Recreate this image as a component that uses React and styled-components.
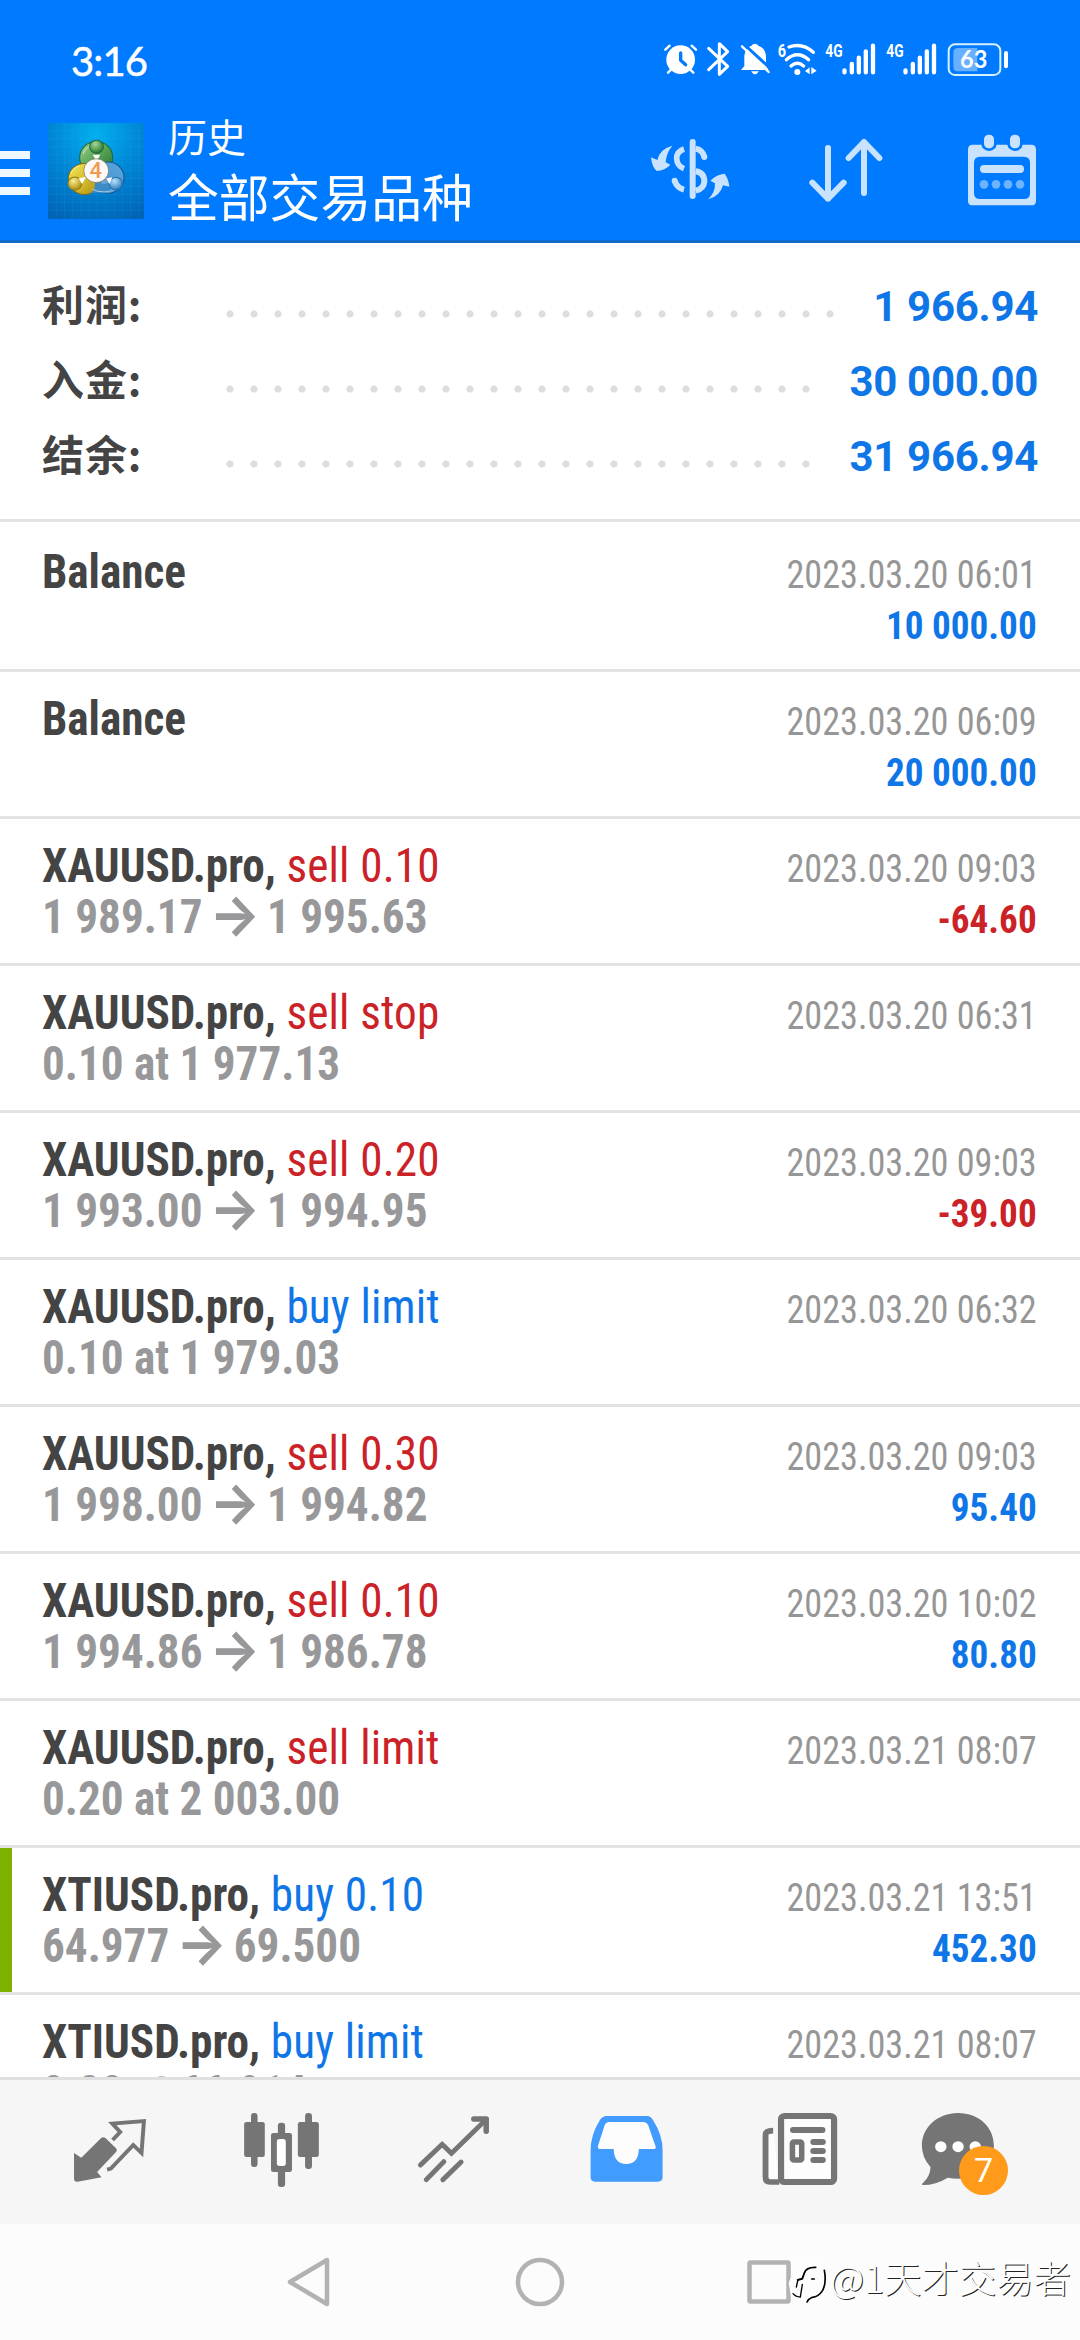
import React from "react";
import styled, { createGlobalStyle, css } from "styled-components";

const Global = createGlobalStyle`
  *, *::before, *::after { box-sizing: border-box; }
  html, body { margin: 0; padding: 0; background: #fff; }
  body { font-family: Roboto, "Noto Sans CJK SC", sans-serif; }
`;

const BLUE = "#007aff";
const TONES = { buy: "#0f76e8", sell: "#cb2228" };

const Screen = styled.div`
  width: 1080px;
  height: 2340px;
  display: flex;
  flex-direction: column;
  overflow: hidden;
  background: #fff;
`;

/* ---------- header ---------- */
const Header = styled.header`
  flex: none;
  height: 243px;
  background: ${BLUE};
  border-bottom: 3px solid #116bcd;
  color: #fff;
`;

const StatusBar = styled.div`
  height: 118px;
  padding: 0 72px 0 70px;
  display: flex;
  align-items: center;
  justify-content: space-between;
`;

const Clock = styled.span`
  font-family: Lato, Roboto, sans-serif;
  font-size: 40px;
  line-height: 48px;
  letter-spacing: -0.9px;
  -webkit-text-stroke: 0.5px #fff;
  padding: 4px 0 0 1px;
`;

const StatusIcons = styled.div`
  display: flex;
  align-items: center;
`;

const Toolbar = styled.div`
  height: 122px;
  display: flex;
  align-items: flex-start;
`;

const MenuButton = styled.div`
  width: 30px;
  padding-top: 33px;
  display: flex;
  flex-direction: column;
  gap: 10px;
`;

const MenuLine = styled.i`
  height: 8px;
  background: #eef8ff;
`;

const AppLogo = styled.svg`
  margin: 5px 24px 0 18px;
  width: 96px;
  height: 96px;
`;

const Titles = styled.div`
  flex: 1;
  font-family: "Noto Sans CJK SC", sans-serif;
  font-weight: 400;
`;

const Overline = styled.div`
  font-size: 39px;
  line-height: 44px;
  margin-top: -5px;
`;

const Title = styled.div`
  font-size: 50.8px;
  line-height: 60px;
  margin-top: 8px;
`;

const ToolButton = styled.div`
  width: 156px;
  height: 104px;
  display: flex;
  justify-content: center;
`;

/* ---------- summary ---------- */
const Summary = styled.section`
  flex: none;
  height: 279px;
  padding: 25px 42px 0;
  border-bottom: 3px solid #e3e3e3;
`;

const SummaryRow = styled.div`
  height: 75px;
  display: flex;
  align-items: center;
`;

const SummaryLabel = styled.span`
  width: 176px;
  margin-top: -5px;
  font-family: "Noto Sans CJK SC", sans-serif;
  font-size: 42px;
  line-height: 60px;
  letter-spacing: 0.9px;
  font-weight: 700;
  color: #444;
`;

const Leader = styled.span`
  width: ${(p) => p.$dots * 24}px;
  height: 8px;
  margin-top: 17px;
  background: radial-gradient(circle at 12px 4px, #dedede 3.2px, transparent 4px) 0 0 / 24px 8px repeat-x;
`;

const SummaryValue = styled.span`
  flex: 1;
  margin-top: 2px;
  text-align: right;
  font-size: 42px;
  line-height: 50px;
  letter-spacing: -0.3px;
  font-weight: 700;
  color: ${TONES.buy};
`;

/* ---------- history ---------- */
const History = styled.main`
  flex: none;
  height: 1555px;
  overflow: hidden;
`;

const condensed = css`
  font-family: "Roboto Condensed", Roboto, sans-serif;
  font-stretch: 75%;
  white-space: pre;
`;

const Deal = styled.article`
  height: 147px;
  padding-right: 43px;
  border-top: 3px solid ${(p) => (p.$first ? "transparent" : "#e3e3e3")};
  display: flex;
`;

const Marker = styled.i`
  width: 12px;
  background: ${(p) => (p.$on ? "#7fb200" : "transparent")};
`;

const DealBody = styled.div`
  flex: 1;
  padding: 21px 0 0 30px;
  ${condensed}
  font-size: 48px;
  line-height: 51px;
  color: #444;
  font-weight: 700;
`;

const Heading = styled.div`
  transform: scaleX(0.941);
  transform-origin: left;
`;

const Kind = styled.span`
  font-weight: 400;
  letter-spacing: 0.2px;
  color: ${(p) => TONES[p.$tone]};
`;

const Prices = styled(Heading)`
  color: #98989a;
`;

const Arrow = styled.span`
  font-family: Inter, sans-serif;
  font-size: 57px;
  line-height: 30px;
  font-weight: 700;
  letter-spacing: -4px;
  margin-left: -4px;
  vertical-align: -2px;
`;

const DealMeta = styled.div`
  ${condensed}
  font-size: 39px;
  line-height: 51px;
  padding-top: 25px;
  text-align: right;
  color: #969696;
`;

const Time = styled.div`
  transform: scaleX(0.928);
  transform-origin: right;
`;

const Amount = styled.div`
  transform: scaleX(0.952);
  transform-origin: right;
  font-weight: 700;
  color: ${(p) => TONES[p.$tone]};
`;

/* ---------- bottom ---------- */
const Tabs = styled.nav`
  flex: none;
  height: 147px;
  padding-left: 22px;
  display: flex;
  border-top: 3px solid #e0e0e0;
  background: #f6f6f6;
`;

const Tab = styled.div`
  position: relative;
  width: 173px;
  height: 144px;
`;

const Badge = styled.span`
  position: absolute;
  left: 72px;
  top: 66px;
  width: 49px;
  height: 49px;
  border-radius: 50%;
  background: #ff9a1a;
  color: #fff;
  font-size: 34px;
  line-height: 49px;
  text-align: center;
`;

const SystemNav = styled.footer`
  position: relative;
  flex: none;
  height: 116px;
  display: flex;
  justify-content: center;
  background: #fcfcfc;
`;

const NavButton = styled.div`
  width: 230px;
  height: 116px;
  display: flex;
  align-items: center;
  justify-content: center;
`;

const Watermark = styled.div`
  position: absolute;
  right: 9px;
  top: 26px;
  display: flex;
  align-items: center;
  gap: 2px;
  font-family: "Noto Sans CJK SC", sans-serif;
  font-size: 37.4px;
  line-height: 50px;
  font-weight: 300;
  color: #fff;
  text-shadow: 1px 1px 0 #222;
`;

const WatermarkMark = styled.svg`
  width: 40px;
  height: 46px;
  margin-top: 8px;
`;

/* ---------- status glyphs ---------- */
function Glyph({ x, w, children }) {
  return (
    <svg width={w / 3} height={40} viewBox={`${x} 57 ${w} 120`} fill="none" stroke="#fff" strokeLinecap="round" strokeLinejoin="round">
      {children}
    </svg>
  );
}

function Signal() {
  return (
    <Glyph x={541} w={183}>
      <text x="554" y="112" fontFamily="Roboto" fontWeight="700" fontSize="56" textLength="52" lengthAdjust="spacingAndGlyphs" fill="#fff" stroke="none">4G</text>
      <path d="M611.500 151V157M633.500 132V157M654.500 113V157M675.500 94V157M697 77V157" strokeWidth="13" />
    </Glyph>
  );
}

function StatusGlyphs() {
  return (
    <StatusIcons>
      <Glyph x={70} w={116}>
        <circle cx="120" cy="119" r="43" fill="#fff" stroke="none" />
        <path d="M74 89L87 77M153 77L166 89M82 158L92 148M158 158L148 148" strokeWidth="7" />
        <path d="M120 99V121L135 134" stroke={BLUE} strokeWidth="10" />
      </Glyph>
      <Glyph x={186} w={99}>
        <path d="M206 85L263 139L238 163V71L263 95L206 149" strokeWidth="9" />
      </Glyph>
      <Glyph x={285} w={117}>
        <path d="M303 150L313 138V112C313 92 324 80 335 77C338 69 351 69 355 77C368 81 378 92 378 112V138L386 150Z" fill="#fff" stroke="none" />
        <path d="M333 154Q345 172 357 154Z" fill="#fff" stroke="none" />
        <path d="M311 72L396 150" stroke={BLUE} strokeWidth="9" />
        <path d="M306 79L386 156" strokeWidth="7" />
      </Glyph>
      <Glyph x={402} w={139}>
        <text x="413" y="111" fontFamily="Roboto" fontWeight="700" fontSize="56" textLength="25" lengthAdjust="spacingAndGlyphs" fill="#fff" stroke="none">6</text>
        <circle cx="472" cy="156" r="9" fill="#fff" stroke="none" />
        <path d="M453 138Q472 121 491 138M439 119Q472 89 506 119M447 81Q487 67 520 97" strokeWidth="10" />
        <path d="M509 142V163L495 153ZM514 141V163L530 152Z" fill="#fff" stroke="none" />
      </Glyph>
      <Signal />
      <Signal />
      <Glyph x={907} w={196}>
        <path d="M952 84H1010V154H952Q938 154 938 140V98Q938 84 952 84Z" fill="#66b0ff" stroke="none" />
        <rect x="924" y="73" width="155" height="92" rx="19" strokeWidth="6" stroke="#d8f0ff" />
        <path d="M1096 99V139" strokeWidth="12" />
        <text x="958" y="144" fontFamily="Lato" fontWeight="700" fontSize="72" textLength="82" lengthAdjust="spacingAndGlyphs" fill="#fff" stroke="none">63</text>
      </Glyph>
    </StatusIcons>
  );
}

function LogoArt() {
  return (
    <AppLogo viewBox="139 368 279 290" preserveAspectRatio="none">
      <defs>
        <radialGradient id="lg" cx=".5" cy=".12" r=".95">
          <stop offset="0" stopColor="#00b0ee" />
          <stop offset=".45" stopColor="#0089d8" />
          <stop offset="1" stopColor="#0064b6" />
        </radialGradient>
        <linearGradient id="gr" x1="0" y1="0" x2="1" y2="1"><stop offset="0" stopColor="#9fcf90" /><stop offset=".5" stopColor="#58a455" /><stop offset="1" stopColor="#256f30" /></linearGradient>
        <linearGradient id="ye" x1="0" y1="0" x2="1" y2="1"><stop offset="0" stopColor="#f3e85a" /><stop offset=".5" stopColor="#d8bf2c" /><stop offset="1" stopColor="#a98a12" /></linearGradient>
        <linearGradient id="bl" x1="1" y1="0" x2="0" y2="1"><stop offset="0" stopColor="#5ba6dc" /><stop offset=".5" stopColor="#4d9ad4" /><stop offset="1" stopColor="#a9d4f0" /></linearGradient>
        <radialGradient id="gb" cx=".4" cy=".3" r=".7"><stop offset="0" stopColor="#a5d698" /><stop offset="1" stopColor="#277a30" /></radialGradient>
        <radialGradient id="yb" cx=".4" cy=".3" r=".7"><stop offset="0" stopColor="#fbf08c" /><stop offset="1" stopColor="#ab8a12" /></radialGradient>
        <radialGradient id="bb" cx=".4" cy=".3" r=".7"><stop offset="0" stopColor="#b8e0fa" /><stop offset="1" stopColor="#2f7fc2" /></radialGradient>
      </defs>
      <rect x="139" y="368" width="279" height="290" fill="url(#lg)" />
      <path d="M163 368V658M187 368V658M211 368V658M235 368V658M259 368V658M283 368V658M307 368V658M331 368V658M355 368V658M379 368V658M403 368V658M139 392H418M139 416H418M139 440H418M139 464H418M139 488H418M139 512H418M139 536H418M139 560H418M139 584H418M139 608H418M139 632H418" stroke="#48b9f0" strokeOpacity=".18" strokeWidth="2" />
      <g strokeWidth="3">
        <circle cx="279" cy="472" r="48" fill="url(#gr)" stroke="#1e6a3c" />
        <circle cx="313" cy="533" r="47" fill="url(#bl)" stroke="#15568f" />
        <circle cx="245" cy="537" r="47" fill="url(#ye)" stroke="#7d6d18" />
        <path d="M262 581Q280 566 274 540Q300 560 325 545Q330 570 305 580Q280 576 262 581Z" fill="#3c8ac6" stroke="none" />
        <path d="M241 462Q248 440 268 436M205 520Q214 500 232 497M268 568Q290 580 315 574" fill="none" stroke="#fff" strokeOpacity=".5" />
        <circle cx="280" cy="440" r="20" fill="url(#gb)" stroke="#1e6a3c" />
        <circle cx="217" cy="551" r="20" fill="url(#yb)" stroke="#8e7a18" />
        <circle cx="336" cy="551" r="19" fill="url(#bb)" stroke="#2270ad" />
      </g>
      <path d="M269 464H291L280 484ZM228 536L238 552L250 530ZM326 532L318 552L308 536Z" fill="#fff" />
      <circle cx="279" cy="512" r="36" fill="#fdf9f6" stroke="#6f6a5c" strokeWidth="2" />
      <text x="278" y="534" textAnchor="middle" fontFamily="Roboto" fontWeight="500" fontSize="64" fill="#f39a4c">4</text>
    </AppLogo>
  );
}

const ICE = "#c9e3ff";

function HeaderTools() {
  return (
    <>
      <ToolButton>
        <svg width="80" height="104" viewBox="30 294 240 312" fill="none" stroke={ICE} strokeLinecap="round">
          <path d="M158 366V528" strokeWidth="18" />
          <path d="M132 387Q109 395 110 416Q111 438 132 446" strokeWidth="17" strokeLinecap="butt" />
          <path d="M167 386Q188 390 193 411M167 454Q193 458 193 485Q191 506 167 512M104 483Q112 504 132 509" strokeWidth="18" strokeLinecap="butt" />
          <circle cx="193" cy="411" r="9" fill={ICE} stroke="none" />
          <circle cx="104" cy="482" r="9" fill={ICE} stroke="none" />
          <path d="M97 377Q59 387 52 420L33 412Q36 441 50 453Q75 452 91 434L77 427Q79 399 97 377ZM204 538Q226 518 225 490L211 482Q230 463 254 461Q266 478 268 500L249 496Q240 530 204 538Z" fill={ICE} stroke="none" />
        </svg>
      </ToolButton>
      <ToolButton>
        <svg width="80" height="104" viewBox="498 294 240 312" fill="none" stroke={ICE} strokeWidth="18" strokeLinecap="round" strokeLinejoin="round">
          <path d="M564 384V536M517 488L564 536L611 488M672 519V366M626 414L672 366L718 414" />
        </svg>
      </ToolButton>
      <ToolButton>
        <svg width="80" height="104" viewBox="966 294 240 312">
          <path fillRule="evenodd" fill={ICE} d="M998 374H1174Q1188 374 1188 388V542Q1188 556 1174 556H998Q984 556 984 542V388Q984 374 998 374ZM1020 410Q1002 410 1002 428V519Q1002 537 1020 537H1152Q1170 537 1170 519V428Q1170 410 1152 410Z" />
          <g fill={ICE} stroke={BLUE} strokeWidth="8">
            <rect x="1028" y="340" width="38" height="49" rx="18" />
            <rect x="1106" y="340" width="38" height="49" rx="18" />
          </g>
          <rect x="1020" y="435" width="132" height="24" rx="12" fill={ICE} />
          <g fill="#6db3ff">
            <circle cx="1032" cy="493" r="13" /><circle cx="1068" cy="493" r="13" /><circle cx="1104" cy="493" r="13" /><circle cx="1140" cy="493" r="13" />
          </g>
        </svg>
      </ToolButton>
    </>
  );
}

/* ---------- tab icons ---------- */
const GREY = "#757575";

function TabIcon({ x, children }) {
  return (
    <svg width="173" height="144" viewBox={`${x} 30 502.400 432`} preserveAspectRatio="none" fill="none">
      {children}
    </svg>
  );
}

function TabBar() {
  return (
    <Tabs>
      <Tab>
        <TabIcon x={63.9}>
          <path d="M215 249L236 263L293 205Q300 199 307 205L337 235Q342 241 337 246L282 306L295 322L225 335Q215 336 215 326Z" fill={GREY} />
          <path d="M327 210L349 186L326 161L418 153L411 249L387 225L322 296L311 299" stroke={GREY} strokeWidth="11.500" />
        </TabIcon>
      </Tab>
      <Tab>
        <TabIcon x={566.3}>
          <g fill={GREY}>
            <rect x="709" y="156" width="60" height="105" rx="7" /><rect x="729" y="129" width="19" height="162" rx="9" />
            <rect x="865" y="156" width="61" height="105" rx="7" /><rect x="886" y="129" width="20" height="168" rx="9" />
            <rect x="787" y="189" width="61" height="117" rx="7" /><rect x="807" y="158" width="21" height="193" rx="9" />
          </g>
          <rect x="804" y="207" width="26" height="81" rx="8" fill="#fff" />
        </TabIcon>
      </Tab>
      <Tab>
        <TabIcon x={1068.7}>
          <g stroke={GREY} strokeWidth="14.500" strokeLinecap="round">
            <path d="M1221 285L1284 223L1311 250L1412 148M1238 329L1289 275M1286 329L1339 276" />
            <path d="M1376 147H1412V184" strokeWidth="16" strokeLinejoin="round" />
          </g>
        </TabIcon>
      </Tab>
      <Tab>
        <TabIcon x={2.9}>
          <path d="M193 138H312Q322 139 328 150Q356 195 356 240V322Q356 335 342 335H160Q147 335 147 322V240Q147 195 174 150Q181 139 193 138Z" fill="#429cff" />
          <path d="M202 156H301Q311 157 314 165L336 230Q337 237 330 237H287Q286 282 250 282Q215 282 214 237H172Q167 236 168 229L188 165Q192 156 202 156Z" fill="#fdfdfd" />
        </TabIcon>
      </Tab>
      <Tab>
        <TabIcon x={505.3}>
          <path d="M677 182Q655 182 655 195V322Q655 336 668 336H695" fill="#fdfdfd" stroke={GREY} strokeWidth="17" />
          <rect x="700" y="138" width="154" height="198" rx="10" fill="#fdfdfd" stroke={GREY} strokeWidth="18" />
          <path d="M735 180H820M794 216H821M794 243H821M794 270H821" stroke={GREY} strokeWidth="18" strokeLinecap="round" />
          <rect x="733" y="216" width="27" height="54" rx="4" stroke={GREY} strokeWidth="16" />
        </TabIcon>
      </Tab>
      <Tab>
        <TabIcon x={1007.7}>
          <path d="M1214 129C1275 129 1318 172 1318 227S1275 326 1214 326Q1198 326 1184 323Q1150 345 1112 345Q1106 343 1113 338Q1134 318 1134 291Q1109 262 1109 227C1109 172 1155 129 1214 129Z" fill={GREY} />
          <g fill="#fff"><circle cx="1164" cy="230" r="16.500" /><circle cx="1214" cy="230" r="16.500" /><circle cx="1264" cy="230" r="16.500" /></g>
        </TabIcon>
        <Badge>7</Badge>
      </Tab>
    </Tabs>
  );
}

function NavigationBar() {
  const line = { fill: "none", stroke: "#b2b2b2", strokeWidth: 4.5, strokeLinejoin: "round" };
  return (
    <SystemNav>
      <NavButton>
        <svg width="50" height="50" viewBox="0 0 50 50"><path {...line} d="M42 3V47L5 25Z" /></svg>
      </NavButton>
      <NavButton>
        <svg width="50" height="50" viewBox="0 0 50 50"><circle {...line} cx="25" cy="25" r="22" /></svg>
      </NavButton>
      <NavButton>
        <svg width="50" height="50" viewBox="0 0 50 50"><rect {...line} x="4.500" y="5.500" width="39" height="39" rx="1" /></svg>
      </NavButton>
      <Watermark>
        <WatermarkMark viewBox="15 55 120 138" fill="none" stroke="#000" strokeLinecap="round">
          <path d="M28 57H112L130 88L131 130L118 158L72 190L40 175L24 170L17 130L30 96Z" fill="#fdfdfd" stroke="none" />
          <path d="M98 83Q70 82 64 100L58 117L44 121" strokeWidth="5.500" />
          <path d="M44 124L40 142M58 134L52 172Q38 172 30 162" strokeWidth="4" />
          <path d="M86 118H94" strokeWidth="5" />
          <path d="M124 92Q131 128 119 152Q106 172 88 173Q76 178 72 187" strokeWidth="5" />
        </WatermarkMark>
        <span>@1天才交易者</span>
      </Watermark>
    </SystemNav>
  );
}

/* ---------- data ---------- */
const summary = [
  { label: "利润:", value: "1 966.94", dots: 26 },
  { label: "入金:", value: "30 000.00", dots: 25 },
  { label: "结余:", value: "31 966.94", dots: 25 },
];

const deals = [
  { name: "Balance", time: "2023.03.20 06:01", amount: "10 000.00", tone: "buy" },
  { name: "Balance", time: "2023.03.20 06:09", amount: "20 000.00", tone: "buy" },
  { name: "XAUUSD.pro,", kind: "sell 0.10", side: "sell", from: "1 989.17", to: "1 995.63", time: "2023.03.20 09:03", amount: "-64.60", tone: "sell" },
  { name: "XAUUSD.pro,", kind: "sell stop", side: "sell", note: "0.10 at 1 977.13", time: "2023.03.20 06:31" },
  { name: "XAUUSD.pro,", kind: "sell 0.20", side: "sell", from: "1 993.00", to: "1 994.95", time: "2023.03.20 09:03", amount: "-39.00", tone: "sell" },
  { name: "XAUUSD.pro,", kind: "buy limit", side: "buy", note: "0.10 at 1 979.03", time: "2023.03.20 06:32" },
  { name: "XAUUSD.pro,", kind: "sell 0.30", side: "sell", from: "1 998.00", to: "1 994.82", time: "2023.03.20 09:03", amount: "95.40", tone: "buy" },
  { name: "XAUUSD.pro,", kind: "sell 0.10", side: "sell", from: "1 994.86", to: "1 986.78", time: "2023.03.20 10:02", amount: "80.80", tone: "buy" },
  { name: "XAUUSD.pro,", kind: "sell limit", side: "sell", note: "0.20 at 2 003.00", time: "2023.03.21 08:07" },
  { name: "XTIUSD.pro,", kind: "buy 0.10", side: "buy", from: "64.977", to: "69.500", time: "2023.03.21 13:51", amount: "452.30", tone: "buy", marked: true },
  { name: "XTIUSD.pro,", kind: "buy limit", side: "buy", note: "0.20 at 66.914", time: "2023.03.21 08:07" },
];

function DealRow({ deal, first }) {
  return (
    <Deal $first={first}>
      <Marker $on={deal.marked} />
      <DealBody>
        <Heading>
          {deal.name}
          {deal.kind && <Kind $tone={deal.side}> {deal.kind}</Kind>}
        </Heading>
        {deal.from && (
          <Prices>
            {deal.from} <Arrow>→</Arrow> {deal.to}
          </Prices>
        )}
        {deal.note && <Prices>{deal.note}</Prices>}
      </DealBody>
      <DealMeta>
        <Time>{deal.time}</Time>
        {deal.amount && <Amount $tone={deal.tone}>{deal.amount}</Amount>}
      </DealMeta>
    </Deal>
  );
}

export default function App() {
  return (
    <Screen>
      <Global />
      <Header>
        <StatusBar>
          <Clock>3:16</Clock>
          <StatusGlyphs />
        </StatusBar>
        <Toolbar>
          <MenuButton><MenuLine /><MenuLine /><MenuLine /></MenuButton>
          <LogoArt />
          <Titles>
            <Overline>历史</Overline>
            <Title>全部交易品种</Title>
          </Titles>
          <HeaderTools />
        </Toolbar>
      </Header>
      <Summary>
        {summary.map((s) => (
          <SummaryRow key={s.label}>
            <SummaryLabel>{s.label}</SummaryLabel>
            <Leader $dots={s.dots} />
            <SummaryValue>{s.value}</SummaryValue>
          </SummaryRow>
        ))}
      </Summary>
      <History>
        {deals.map((d, i) => <DealRow key={i} deal={d} first={i === 0} />)}
      </History>
      <TabBar />
      <NavigationBar />
    </Screen>
  );
}
